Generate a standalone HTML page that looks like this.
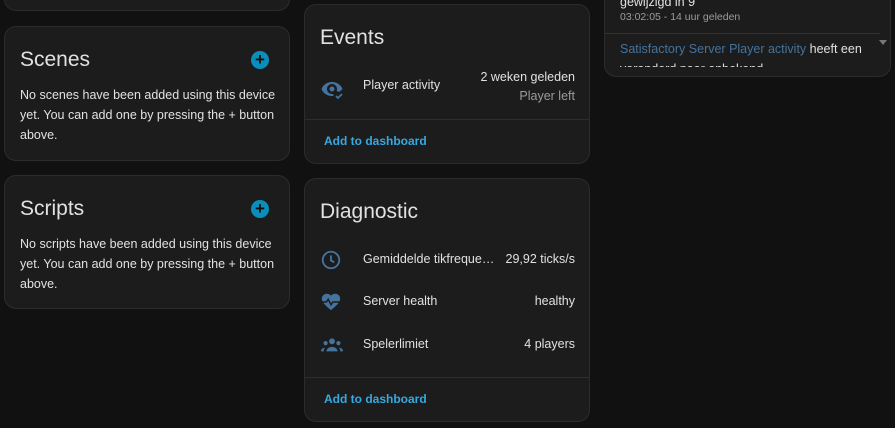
<!DOCTYPE html>
<html><head><style>
*{box-sizing:border-box;margin:0;padding:0}
body{width:895px;height:428px;background:#111111;font-family:"Liberation Sans",sans-serif;color:#e1e1e1;position:relative;overflow:hidden}
.card{position:absolute;background:#1c1c1c;border:1px solid #2c2c2c;border-radius:12px}
.h{position:absolute;font-size:21px;color:#e1e1e1;left:15px}
.p{position:absolute;left:15px;font-size:12.5px;line-height:20px;color:#e1e1e1;width:265px}
.plus{position:absolute;width:18px;height:18px;border-radius:50%;background:#0a8ebc;color:#111;font-weight:bold;font-size:17px;line-height:18px;text-align:center}
.row{position:absolute;left:0;right:0;height:40px;font-size:12.5px}
.row .ic{position:absolute;left:15px;top:10px}
.row .n{position:absolute;left:58px;top:13px}
.row .v{position:absolute;right:14px;top:13px}
.sep{position:absolute;left:0;right:0;height:1px;background:#2e2e2e}
.link{position:absolute;left:19px;font-size:12px;font-weight:bold;color:#36a9e1}
</style></head><body>
<div class="card" style="left:4px;top:-20px;width:286px;height:31px"></div>
<div class="card" style="left:4px;top:26px;width:286px;height:135px">
<div class="h" style="top:21px">Scenes</div>
<div class="plus" style="left:246px;top:24px">+</div>
<div class="p" style="top:58px">No scenes have been added using this device yet. You can add one by pressing the + button above.</div>
</div>
<div class="card" style="left:4px;top:175px;width:286px;height:134px">
<div class="h" style="top:21px">Scripts</div>
<div class="plus" style="left:246px;top:24px">+</div>
<div class="p" style="top:58px">No scripts have been added using this device yet. You can add one by pressing the + button above.</div>
</div>

<div class="card" style="left:304px;top:4px;width:286px;height:160px">
<div class="h" style="top:21px">Events</div>
<div class="row" style="top:60px">
<svg class="ic" width="24" height="24" viewBox="0 0 24 24" style="top:12px"><path fill="#44739e" d="M12 5C7 5 3 8 1.5 12 3 16 7 19 12 19c.6 0 1.2 0 1.7-.1L13 17h-1c-2.8 0-5-2.2-5-5s2.2-5 5-5 5 2.2 5 5c0 .7-.1 1.3-.4 1.9L19 15c1.5-1 2.6-2 3.5-3C21 8 17 5 12 5zm0 4.5a2.5 2.5 0 100 5 2.5 2.5 0 000-5z"/><path d="M16 19l2 2 4-4" stroke="#44739e" stroke-width="1.8" fill="none"/></svg>
<div class="n" style="top:13px">Player activity</div>
<div class="v" style="top:3px;text-align:right;line-height:19px">2 weken geleden<br><span style="color:#9b9b9b">Player left</span></div>
</div>
<div class="sep" style="top:114px"></div>
<div class="link" style="top:129px">Add to dashboard</div>
</div>

<div class="card" style="left:304px;top:178px;width:286px;height:244px">
<div class="h" style="top:21px">Diagnostic</div>
<div class="row" style="top:60px">
<svg class="ic" width="22" height="22" viewBox="0 0 24 24"><circle cx="12" cy="12" r="9" stroke="#44739e" stroke-width="2" fill="none"/><path d="M12 7v5.5l3.5 2" stroke="#44739e" stroke-width="2" fill="none"/></svg>
<div class="n">Gemiddelde tikfreque…</div><div class="v">29,92 ticks/s</div></div>
<div class="row" style="top:102px">
<svg class="ic" width="22" height="22" viewBox="0 0 24 24"><path fill="#44739e" d="M12 21l-1.5-1.3C5.4 15.1 2 12.1 2 8.4 2 5.4 4.4 3 7.4 3c1.7 0 3.4.8 4.6 2.1C13.2 3.8 14.9 3 16.6 3 19.6 3 22 5.4 22 8.4c0 3.7-3.4 6.7-8.5 11.3z"/><path d="M1 12h6l2-3 3 6 2-3h9" stroke="#1c1c1c" stroke-width="1.6" fill="none"/></svg>
<div class="n">Server health</div><div class="v">healthy</div></div>
<div class="row" style="top:145px">
<svg class="ic" width="24" height="22" viewBox="0 0 24 24"><g fill="#44739e"><circle cx="12" cy="8" r="3.2"/><circle cx="5" cy="10" r="2.3"/><circle cx="19" cy="10" r="2.3"/><path d="M6 19c0-3 2.7-5 6-5s6 2 6 5z"/><path d="M0 19c0-2.3 1.6-4 4.3-4-.8 1-1.3 2.4-1.3 4zM24 19c0-2.3-1.6-4-4.3-4 .8 1 1.3 2.4 1.3 4z"/></g></svg>
<div class="n">Spelerlimiet</div><div class="v">4 players</div></div>
<div class="sep" style="top:198px"></div>
<div class="link" style="top:213px">Add to dashboard</div>
</div>

<div class="card" style="left:604px;top:-20px;width:287px;height:97px;overflow:hidden">
<div style="position:absolute;left:0;right:0;top:0;height:86px;overflow:hidden">
<div style="position:absolute;left:15px;top:14px;font-size:12.5px;color:#e1e1e1">gewijzigd in 9</div>
<div style="position:absolute;left:15px;top:30px;font-size:10.5px;color:#9b9b9b">03:02:05 - 14 uur geleden</div>
<div style="position:absolute;left:0;right:10px;top:52px;height:1px;background:#333"></div>
<div style="position:absolute;left:15px;top:61px;font-size:12.5px;color:#44739e;white-space:nowrap">Satisfactory Server Player activity <span style="color:#e1e1e1">heeft een</span></div>
<div style="position:absolute;left:15px;top:81px;font-size:12.5px;color:#e1e1e1">veranderd naar onbekend</div>
</div>
<div style="position:absolute;right:3px;top:59px;width:0;height:0;border-left:4px solid transparent;border-right:4px solid transparent;border-top:5px solid #777"></div>
</div>
</body></html>
